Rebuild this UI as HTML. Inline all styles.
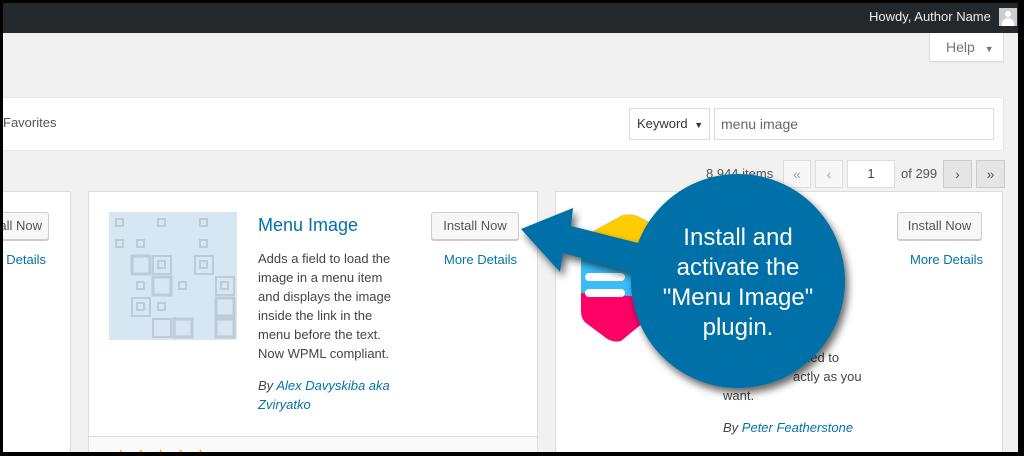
<!DOCTYPE html>
<html><head><meta charset="utf-8"><style>
*{margin:0;padding:0;box-sizing:border-box}
body{width:1024px;height:456px;overflow:hidden;background:#000;font-family:"Liberation Sans",sans-serif;font-size:13px;color:#444;position:relative}
#pg{position:absolute;left:3px;top:3px;width:1015px;height:449px;background:#f1f1f1;overflow:hidden}
.a{position:absolute}
.btn{position:absolute;height:28px;border:1px solid #ccc;border-radius:3px;background:#f7f7f7;box-shadow:0 1px 0 #ccc;color:#555;font-size:13px;line-height:26px;text-align:center}
.lnk{color:#0073aa}
.card{position:absolute;background:#fff;border:1px solid #ddd}
.desc{position:absolute;font-size:13px;line-height:19px;color:#444}
.pb{position:absolute;top:157px;height:28px;border:1px solid #ddd;background:#f7f7f7;color:#a0a5aa;text-align:center;line-height:26px;font-size:14px}
</style></head><body>
<div id="pg">
<div class="a" style="left:0;top:0;width:1015px;height:30px;background:#23282d"></div>
<div class="a" style="left:866px;top:6px;color:#eee;font-size:13px">Howdy, Author Name</div>
<div class="a" style="left:996px;top:5px;width:18px;height:18px;background:#ccc"><div style="position:absolute;left:6px;top:3px;width:6px;height:6px;border-radius:50%;background:#fff"></div><div style="position:absolute;left:3px;top:10px;width:12px;height:8px;border-radius:6px 6px 0 0;background:#fff"></div></div>
<div class="a" style="left:926px;top:30px;width:75px;height:29px;background:#fff;border:1px solid #ddd;border-top:none;box-shadow:0 1px 1px rgba(0,0,0,.04);color:#72777c;line-height:28px;padding-left:16px;font-size:14px">Help <span style="font-size:9px;margin-left:6px">▼</span></div>
<div class="a" style="left:-3px;top:94px;width:1004px;height:54px;background:#fff;border:1px solid #e5e5e5"></div>
<div class="a" style="left:0;top:112px;color:#555">Favorites</div>
<div class="a" style="left:626px;top:105px;width:81px;height:32px;border:1px solid #ddd;background:#fff;color:#32373c;line-height:30px;padding-left:7px">Keyword <span style="font-size:9px;margin-left:3px">▼</span></div>
<div class="a" style="left:711px;top:105px;width:280px;height:32px;border:1px solid #ddd;background:#fff;color:#666;line-height:30px;padding-left:6px;font-size:14px">menu image</div>
<div class="a" style="left:703px;top:163px;color:#555">8,944 items</div>
<div class="pb" style="left:780px;width:28px">«</div>
<div class="pb" style="left:812px;width:28px">‹</div>
<div class="a" style="left:844px;top:157px;width:48px;height:28px;border:1px solid #ddd;background:#fff;text-align:center;line-height:26px">1</div>
<div class="a" style="left:898px;top:163px;color:#555">of 299</div>
<div class="pb" style="left:940px;width:29px;background:#e5e5e5;border-color:#ccc;color:#555">›</div>
<div class="pb" style="left:973px;width:29px;background:#e5e5e5;border-color:#ccc;color:#555">»</div>

<div class="card" style="left:-10px;top:188px;width:78px;height:270px"></div>
<div class="btn" style="left:-50px;top:209px;width:96px;text-align:right;padding-right:6px">Install Now</div>
<div class="a lnk" style="left:-30px;top:249px">More Details</div>

<div class="card" style="left:85px;top:188px;width:450px;height:270px"></div>
<div class="a" style="left:86px;top:433px;width:448px;height:20px;background:#fafafa;border-top:1px solid #ddd"></div>
<div class="a" style="left:113px;top:444px;color:#ffb900;font-size:10px;letter-spacing:10px">▲▲▲▲▲</div>
<svg class="a" style="left:106px;top:209px" width="128" height="128" viewBox="0 0 128 128">
<rect width="128" height="128" fill="#d6e7f3"/>
<g fill="none" stroke="#bccbd6" stroke-width="2">
<rect x="7" y="7" width="7" height="7"/><rect x="49" y="7" width="7" height="7"/><rect x="91" y="7" width="7" height="7"/>
<rect x="7" y="28" width="7" height="7"/><rect x="28" y="28" width="7" height="7"/><rect x="91" y="28" width="7" height="7"/>
<rect x="23" y="44" width="18" height="18" stroke-width="3"/><rect x="44" y="44" width="18" height="18"/><rect x="49" y="49" width="7" height="7"/>
<rect x="86" y="44" width="18" height="18"/><rect x="91" y="49" width="7" height="7"/>
<rect x="28" y="70" width="7" height="7"/><rect x="44" y="65" width="18" height="18" stroke-width="3"/><rect x="70" y="70" width="7" height="7"/><rect x="107" y="65" width="18" height="18"/><rect x="112" y="70" width="7" height="7"/>
<rect x="23" y="86" width="18" height="18"/><rect x="28" y="91" width="7" height="7"/><rect x="49" y="91" width="7" height="7"/><rect x="107" y="86" width="18" height="18" stroke-width="3"/>
<rect x="44" y="107" width="18" height="18"/><rect x="65" y="107" width="18" height="18" stroke-width="3"/><rect x="107" y="107" width="18" height="18" stroke-width="3"/>
</g></svg>
<div class="a lnk" style="left:255px;top:212px;font-size:18px">Menu Image</div>
<div class="btn" style="left:428px;top:209px;width:88px">Install Now</div>
<div class="a lnk" style="left:441px;top:249px">More Details</div>
<div class="desc" style="left:255px;top:246px">Adds a field to load the<br>image in a menu item<br>and displays the image<br>inside the link in the<br>menu before the text.<br>Now WPML compliant.</div>
<div class="desc" style="left:255px;top:373px;font-style:italic">By <span class="lnk">Alex Davyskiba aka<br>Zviryatko</span></div>

<div class="card" style="left:552px;top:188px;width:448px;height:270px"></div>
<div class="btn" style="left:894px;top:209px;width:85px">Install Now</div>
<div class="a lnk" style="left:907px;top:249px">More Details</div>
<svg class="a" style="left:578px;top:210px" width="80" height="130" viewBox="0 0 80 130">
<path d="M0 25 L40 3 Q48 0 56 3 L80 15 V95 L40 128 Q32 130 25 125 L5 110 Q0 106 0 98 Z" fill="#fe0066"/>
<path d="M0 25 L40 3 Q48 0 56 3 L80 15 V85 L0 80 Z" fill="#38bdf8"/>
<path d="M0 25 L40 3 Q48 0 56 3 L80 15 V35 L0 25 Z" fill="#fecc00"/>
<rect x="4" y="60" width="40" height="8" rx="4" fill="#fff"/><rect x="4" y="76" width="40" height="8" rx="4" fill="#fff"/>
</svg>
<div class="desc" style="left:720px;top:345px;width:300px"><span style="margin-left:80px">ded to</span><br><span style="margin-left:70px">actly as you</span><br>want.</div>
<div class="desc" style="left:720px;top:415px;font-style:italic">By <span class="lnk">Peter Featherstone</span></div>

<svg class="a" style="left:0;top:0" width="1015" height="449" viewBox="3 3 1015 449">
<defs><filter id="sh" x="-30%" y="-30%" width="160%" height="160%"><feDropShadow dx="3" dy="5" stdDeviation="4" flood-color="#000" flood-opacity=".6"/></filter></defs>
<g filter="url(#sh)" fill="#0670a8">
<path d="M521 229 L573 208 L571 226 L650 246 L645 276 L563 253 L560 272 Z"/>
<circle cx="738" cy="281" r="107"/>
</g>
</svg>
<div class="a" style="left:628px;top:220px;width:214px;text-align:center;color:#fff;font-size:24px;line-height:30px">Install and<br>activate the<br>"Menu Image"<br>plugin.</div>
</div>
</body></html>
